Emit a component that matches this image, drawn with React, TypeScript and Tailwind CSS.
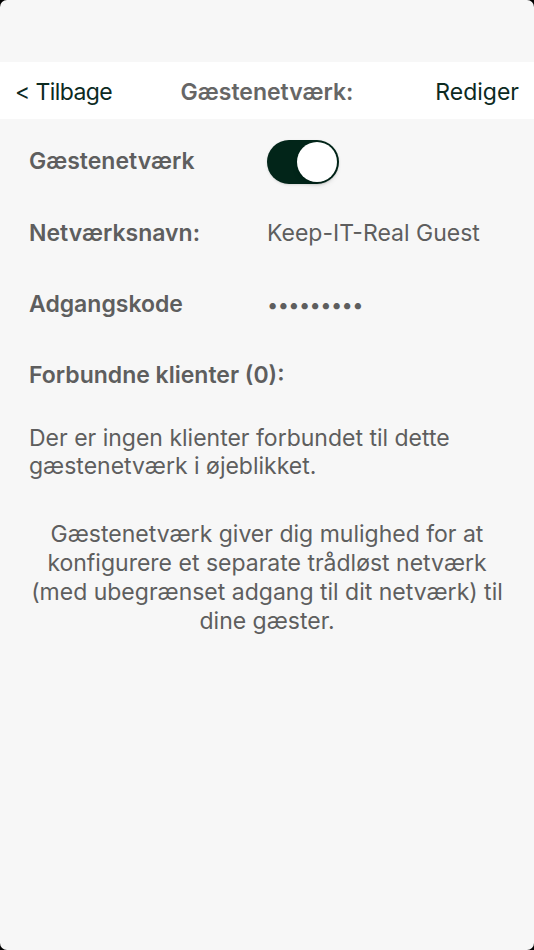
export default function App() {
  return (
    <div className="h-[950px] w-[534px] bg-black">
      <div className="flex h-full flex-col overflow-hidden rounded-[7px] bg-[#f7f7f7] font-['Inter','Liberation_Sans',sans-serif] text-[#5e5e5e]">
        <div className="h-[62px]" />
        <div className="grid h-[57px] grid-cols-[1fr_auto_1fr] items-center bg-white px-[15px] pt-[3px] text-[23px]">
          <span className="text-[#0c2a1f] tracking-[-0.6px]">&lt; Tilbage</span>
          <span className="font-semibold text-[#666666]">Gæstenetværk:</span>
          <span className="text-right text-[#0c2a1f]">Rediger</span>
        </div>
        <div className="flex flex-col px-[29px] pt-[20px] text-[23px]">
          <div className="flex h-[45px] items-center">
            <span className="w-[238px] font-semibold">Gæstenetværk</span>
            <div className="flex h-[44px] w-[72px] items-center justify-end rounded-full bg-[#022519] p-[2px] shadow-sm">
              <div className="h-[40px] w-[40px] rounded-full bg-white shadow-md" />
            </div>
          </div>
          <div className="mt-[27px] flex h-[45px] items-center">
            <span className="w-[238px] font-semibold">Netværksnavn:</span>
            <span>Keep-IT-Real Guest</span>
          </div>
          <div className="mt-[26px] flex h-[45px] items-center">
            <span className="w-[238px] font-semibold">Adgangskode</span>
            <span className="text-[20px] tracking-[-0.6px]">•••••••••</span>
          </div>
          <div className="mt-[26px] flex h-[45px] items-center font-semibold">Forbundne klienter (0):</div>
          <p className="mt-[26px] leading-[28px]">
            Der er ingen klienter forbundet til dette gæstenetværk i øjeblikket.
          </p>
          <p className="mx-[-10px] mt-[40px] text-center leading-[29px]">
            Gæstenetværk giver dig mulighed for at konfigurere et separate trådløst netværk (med ubegrænset adgang til dit netværk) til dine gæster.
          </p>
        </div>
      </div>
    </div>
  );
}
